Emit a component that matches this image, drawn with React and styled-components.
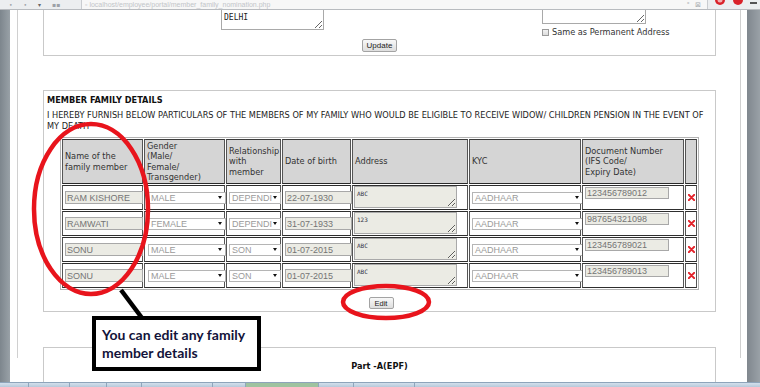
import React from 'react';
import styled, { createGlobalStyle } from 'styled-components';

const GlobalStyle = createGlobalStyle`
  html, body { margin: 0; padding: 0; background: #fff; }
  body { width: 760px; height: 387px; overflow: hidden; }
`;

const Screen = styled.div`
  position: relative;
  width: 760px;
  height: 387px;
  display: flex;
  flex-direction: column;
  overflow: hidden;
  font-family: "DejaVu Sans", Verdana, sans-serif;
  background: #fff;
`;

/* ---------- browser chrome ---------- */

const Chrome = styled.div`
  flex: none;
  height: 10px;
  box-sizing: border-box;
  display: flex;
  background: #eceef0;
  border-bottom: 1px solid #b8bbbf;
  overflow: hidden;
`;

const NavButtons = styled.div`
  width: 72px;
  display: flex;
  gap: 11px;
  padding-left: 9px;
  align-items: center;
  color: #9ca1a7;
  font-size: 6px;
  line-height: 9px;
`;

const Address = styled.div`
  flex: 1;
  display: flex;
  align-items: center;
  gap: 4px;
  background: #f7f7f7;
  border-left: 1px solid #c9ccd0;
  border-right: 1px solid #c9ccd0;
  padding: 0 6px 0 3px;
  font-family: "Liberation Sans", Arial, sans-serif;
  font-size: 7px;
  line-height: 9px;
  color: #c2c5c9;
  white-space: nowrap;
`;

const AddrTools = styled.span`
  margin-left: auto;
  display: flex;
  gap: 6px;
  color: #a9adb2;
`;

const AddonBar = styled.div`
  width: 52px;
  flex: none;
  display: flex;
  align-items: flex-start;
  gap: 6px;
  padding-left: 6px;
  box-sizing: border-box;
`;

const Dash = styled.span`
  width: 7px;
  height: 2px;
  margin-top: 2px;
  background: #555;
`;

/* ---------- window body ---------- */

const Body = styled.div`
  flex: 1;
  display: flex;
  min-height: 0;
`;

const LeftRail = styled.div`
  width: 10px;
  flex: none;
  background: linear-gradient(90deg, #7d868d, #99a1a7);
`;

const Viewport = styled.div`
  flex: 1;
  min-width: 0;
  overflow: hidden;
  background: #fff;
`;

const ScrollBar = styled.div`
  width: 13px;
  flex: none;
  background: linear-gradient(90deg, #80878e, #9aa1a7);
`;

const Taskbar = styled.div`
  flex: none;
  height: 4px;
  display: flex;
  border-top: 1px solid #8ea4ba;
  background: linear-gradient(#d4e0ec, #b7c9da);
`;

const TaskItem = styled.div`
  width: ${p => p.$w}px;
  border-right: 1px solid #90a6bc;
  background: ${p => p.$c || 'transparent'};
`;

const Page = styled.div`
  margin-left: 7px;
  width: 724px;
  height: 100%;
  box-sizing: border-box;
  border-left: 1px solid #d0d0d0;
  border-right: 1px solid #d0d0d0;
  padding: 0 24px 0 25px;
`;

const Scroll = styled.div`
  margin-top: -24px;
  display: flex;
  flex-direction: column;
`;

const Panel = styled.div`
  border: 1px solid #c9c9c9;
  padding: ${p => p.$pad || '0'};
  margin-top: ${p => p.$mt || 0}px;
`;

/* ---------- upper (address) panel ---------- */

const FieldGrid = styled.div`
  display: grid;
  grid-template-columns: 177px 321px 1fr;
  align-items: start;
`;

const Area = styled.textarea`
  display: block;
  box-sizing: border-box;
  width: ${p => p.$w}px;
  height: ${p => p.$h}px;
  margin: 0;
  padding: ${p => p.$pt || 1}px 2px 0;
  border: 1px solid #a9a9a9;
  background: ${p => p.$bg || '#fff'};
  font-family: "DejaVu Sans Mono", monospace;
  font-size: ${p => p.$fs || 8}px;
  line-height: 9px;
  color: ${p => p.$color || '#222'};
  resize: both;
  overflow: hidden;
`;

const CheckRow = styled.div`
  display: flex;
  align-items: center;
  gap: 3px;
  margin-top: 3px;
  font-size: 8.2px;
  color: #333;
`;

const CheckBox = styled.span`
  width: 7px;
  height: 7px;
  box-sizing: border-box;
  border: 1px solid #9a9a9a;
  background: linear-gradient(#f2f2f2, #dcdcdc);
`;

const Button = styled.button`
  display: block;
  box-sizing: border-box;
  margin: ${p => p.$mt}px auto 0;
  width: ${p => p.$w}px;
  height: ${p => p.$h}px;
  padding: 0;
  border: 1px solid #a3a3a3;
  border-radius: 2px;
  background: linear-gradient(#f8f8f8, #dedede);
  font-family: "Liberation Sans", Arial, sans-serif;
  font-size: ${p => p.$fs}px;
  color: #222;
`;

/* ---------- member family panel ---------- */

const Title = styled.div`
  font-weight: bold;
  font-size: 8.2px;
  line-height: 10px;
  color: #111;
`;

const Intro = styled.p`
  margin: 5px 0 0;
  font-size: 8.2px;
  line-height: 11px;
  color: #222;
`;

const Table = styled.table`
  margin: 5px 0 0 13px;
  width: 639px;
  table-layout: fixed;
  border-collapse: separate;
  border-spacing: 1px;
  border: 1px solid #b3b3b3;
`;

const HeadRow = styled.tr`
  height: 45px;
`;

const Row = styled.tr`
  height: 25px;
`;

const Th = styled.th`
  width: ${p => p.$w}px;
  box-sizing: border-box;
  padding: 0 2px;
  border: 1px solid #3a3a3a;
  border-color: #3a3a3a #555 #2a2a2a #555;
  background: #d5d5d5;
  font-weight: normal;
  font-size: 8.2px;
  line-height: 10.5px;
  color: #333;
  text-align: left;
  vertical-align: middle;
`;

const Td = styled.td`
  box-sizing: border-box;
  padding: ${p => p.$pad || '1px'};
  border: 1px solid #2e2e2e;
  border-color: #2e2e2e #555 #2e2e2e #555;
  vertical-align: ${p => p.$top ? 'top' : 'middle'};
  text-align: ${p => p.$center ? 'center' : 'left'};
`;

const TextField = styled.input`
  display: block;
  box-sizing: border-box;
  width: ${p => p.$w}px;
  height: ${p => p.$h || 13}px;
  margin: 0 auto 0 ${p => p.$ml || 1}px;
  padding: 0 1px;
  border: 1px solid #a8a8a8;
  background: #ebebe4;
  font-family: "Liberation Sans", Arial, sans-serif;
  font-size: 9px;
  color: #747474;
  outline: none;
`;

const Select = styled.div`
  box-sizing: border-box;
  width: ${p => p.$w}px;
  height: 12px;
  margin-left: ${p => p.$ml || 1}px;
  display: flex;
  align-items: center;
  justify-content: space-between;
  padding: 0 3px 0 2px;
  border: 1px solid #b5b5b5;
  background: #fff;
  font-family: "Liberation Sans", Arial, sans-serif;
  font-size: 9px;
  color: #9a9a9a;
  overflow: hidden;
  white-space: nowrap;
`;

const Caret = styled.span`
  flex: none;
  width: 0;
  height: 0;
  border-left: 2px solid transparent;
  border-right: 2px solid transparent;
  border-top: 3px solid #111;
`;

const PartTitle = styled.div`
  text-align: center;
  font-weight: bold;
  font-size: 8.2px;
  line-height: 10px;
  color: #111;
`;

/* ---------- annotations over the screenshot ---------- */

const Marks = styled.svg`
  position: absolute;
  left: 0;
  top: 0;
  pointer-events: none;
`;

const Callout = styled.div`
  position: absolute;
  left: 92px;
  top: 316px;
  width: 169px;
  height: 55px;
  box-sizing: border-box;
  border: 4px solid #000;
  background: #fff;
  padding: 6px 0 0 6px;
  font-family: Lato, "Open Sans", sans-serif;
  font-weight: bold;
  font-size: 14px;
  line-height: 18px;
  color: #13133a;
`;

const DeleteIcon = () => (
  <svg width="7" height="7" viewBox="0 0 8 8" style={{ display: 'block', margin: '0 auto' }}>
    <path d="M1 1 L7 7 M7 1 L1 7" stroke="#e3232b" strokeWidth="2.4" strokeLinecap="round" />
  </svg>
);

const members = [
  { name: 'RAM KISHORE', gender: 'MALE', rel: 'DEPENDI', dob: '22-07-1930', addr: 'ABC', kyc: 'AADHAAR', doc: '123456789012' },
  { name: 'RAMWATI', gender: 'FEMALE', rel: 'DEPENDI', dob: '31-07-1933', addr: '123', kyc: 'AADHAAR', doc: '987654321098' },
  { name: 'SONU', gender: 'MALE', rel: 'SON', dob: '01-07-2015', addr: 'ABC', kyc: 'AADHAAR', doc: '123456789021' },
  { name: 'SONU', gender: 'MALE', rel: 'SON', dob: '01-07-2015', addr: 'ABC', kyc: 'AADHAAR', doc: '123456789013' },
];

export default function App() {
  return (
    <Screen>
      <GlobalStyle />
      <Chrome>
        <NavButtons>
          <span>•</span><span>•</span><span style={{ color: '#666' }}>▾</span><span>▪▪</span>
        </NavButtons>
        <Address>
          <span>▫ localhost/employee/portal/member_family_nomination.php</span>
          <AddrTools><span>⁼</span><span>⊠</span></AddrTools>
        </Address>
        <AddonBar>
          <svg width="12" height="7" viewBox="0 0 12 7"><path d="M1 0 A5 5 0 0 0 11 0 Z" fill="#d9222a" /><path d="M3.5 0 A2.5 2.5 0 0 0 8.5 0 Z" fill="#f2aeb1" /></svg>
          <svg width="12" height="7" viewBox="0 0 12 7"><path d="M1 0 A5 5 0 0 0 11 0 Z" fill="#d9222a" /></svg>
          <Dash />
        </AddonBar>
      </Chrome>

      <Body>
        <LeftRail />
        <Viewport>
          <Page>
            <Scroll>
              <Panel $pad="4px 0 3px">
                <FieldGrid>
                  <div />
                  <Area $w={103} $h={39} $pt={21} defaultValue="DELHI" readOnly />
                  <div>
                    <Area $w={104} $h={33} defaultValue="" readOnly />
                    <CheckRow><CheckBox />Same as Permanent Address</CheckRow>
                  </div>
                </FieldGrid>
                <Button $mt={2} $w={35} $h={13} $fs={8}>Update</Button>
              </Panel>

              <Panel $mt={34} $pad="4px 0 2px 3px">
                <Title>MEMBER FAMILY DETAILS</Title>
                <Intro>
                  I HEREBY FURNISH BELOW PARTICULARS OF THE MEMBERS OF MY FAMILY WHO WOULD BE ELIGIBLE TO RECEIVE WIDOW/ CHILDREN PENSION IN THE EVENT OF MY DEATH
                </Intro>
                <Table>
                  <thead>
                    <HeadRow>
                      <Th $w={81}>Name of the<br />family member</Th>
                      <Th $w={81}>Gender<br />(Male/<br />Female/<br />Transgender)</Th>
                      <Th $w={55}>Relationship<br />with<br />member</Th>
                      <Th $w={69}>Date of birth</Th>
                      <Th $w={116}>Address</Th>
                      <Th $w={112}>KYC</Th>
                      <Th $w={102}>Document Number<br />(IFS Code/<br />Expiry Date)</Th>
                      <Th $w={12} />
                    </HeadRow>
                  </thead>
                  <tbody>
                    {members.map((m, i) => (
                      <Row key={i}>
                        <Td><TextField $w={78} defaultValue={m.name} readOnly /></Td>
                        <Td><Select $w={78} $ml={2}>{m.gender}<Caret /></Select></Td>
                        <Td><Select $w={52}>{m.rel}<Caret /></Select></Td>
                        <Td><TextField $w={67} $ml={0} defaultValue={m.dob} readOnly /></Td>
                        <Td $top $pad="0 1px"><Area $w={103} $h={22} $bg="#ebebe4" $fs={6} $color="#334" $pt={2} defaultValue={m.addr} readOnly /></Td>
                        <Td><Select $w={111} $ml={0}>{m.kyc}<Caret /></Select></Td>
                        <Td $top><TextField $w={84} $h={12} $ml={0} defaultValue={m.doc} readOnly /></Td>
                        <Td $center $pad="0"><DeleteIcon /></Td>
                      </Row>
                    ))}
                  </tbody>
                </Table>
                <Button $mt={7} $w={25} $h={12} $fs={7.5}>Edit</Button>
              </Panel>

              <Panel $mt={35} $pad="13px 0 20px">
                <PartTitle>Part -A(EPF)</PartTitle>
              </Panel>
            </Scroll>
          </Page>
        </Viewport>
        <ScrollBar />
      </Body>

      <Taskbar>
        <TaskItem $w={28} />
        <TaskItem $w={40} />
        <TaskItem $w={36} />
        <TaskItem $w={34} />
        <TaskItem $w={70} />
        <TaskItem $w={32} />
        <TaskItem $w={72} $c="#9fc3a0" />
        <TaskItem $w={34} />
        <TaskItem $w={60} />
      </Taskbar>

      <Marks width="760" height="387" viewBox="0 0 760 387">
        <ellipse cx="91" cy="209" rx="57" ry="85" fill="none" stroke="#e8141c" strokeWidth="4.5" />
        <ellipse cx="386" cy="302" rx="43" ry="16" fill="none" stroke="#e8141c" strokeWidth="4.5" />
        <line x1="121" y1="290" x2="142" y2="318" stroke="#000" strokeWidth="4.5" />
      </Marks>
      <Callout>You can edit any family<br />member details</Callout>
    </Screen>
  );
}
